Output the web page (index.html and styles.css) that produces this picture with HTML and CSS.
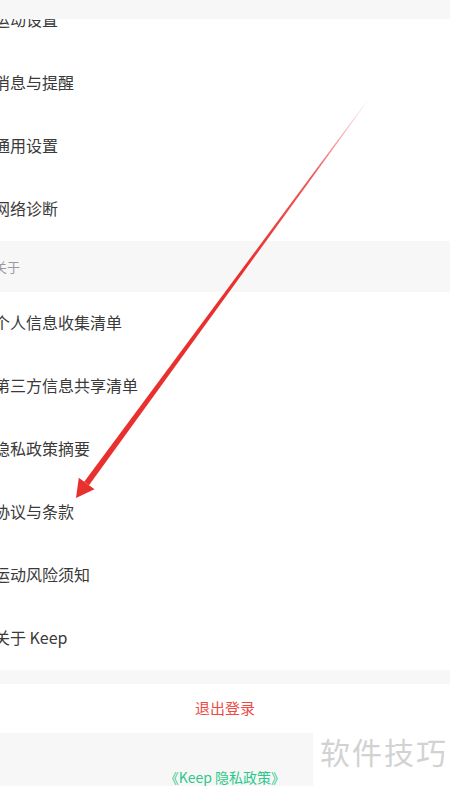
FILE: index.html
```html
<!DOCTYPE html>
<html lang="zh-CN">
<head>
    <meta charset="UTF-8">
    <meta name="viewport" content="width=device-width, initial-scale=1.0">
    <title>设置</title>
    <link rel="stylesheet" href="styles.css">
</head>
<body>

    <div class="page">
        <!-- top bar sits over the first row -->
        <div class="top-cover"></div>

        <div class="group first">
            <div class="row"><span>运动设置</span></div>
            <div class="row"><span>消息与提醒</span></div>
            <div class="row"><span>通用设置</span></div>
            <div class="row"><span>网络诊断</span></div>
        </div>

        <div class="section-title"><span>关于</span></div>

        <div class="group">
            <div class="row"><span>个人信息收集清单</span></div>
            <div class="row"><span>第三方信息共享清单</span></div>
            <div class="row"><span>隐私政策摘要</span></div>
            <div class="row"><span>协议与条款</span></div>
            <div class="row"><span>运动风险须知</span></div>
            <div class="row"><span>关于 Keep</span></div>
        </div>

        <div class="logout">退出登录</div>

        <div class="footer">
            <a class="policy">《Keep 隐私政策》</a>
        </div>

        <!-- red annotation arrow -->
        <svg class="arrow" width="450" height="786" viewBox="0 0 450 786">
            <defs>
                <linearGradient id="fade" gradientUnits="userSpaceOnUse" x1="370" y1="98" x2="84" y2="484">
                    <stop offset="0" stop-color="#e8302f" stop-opacity="0"/>
                    <stop offset="0.2" stop-color="#e8302f" stop-opacity="0.8"/>
                    <stop offset="0.45" stop-color="#e8302f" stop-opacity="1"/>
                    <stop offset="1" stop-color="#e8302f" stop-opacity="1"/>
                </linearGradient>
            </defs>
            <polygon points="368.3,100.2 367.7,99.8 84.2,481.7 89.0,485.3" fill="url(#fade)"/>
            <polygon points="94.5,489.2 78.8,477.8 76,498" fill="#e8302f"/>
        </svg>

        <div class="watermark">软件技巧</div>
    </div>

</body>
</html>
```

FILE: styles.css
```css
* {
    margin: 0;
    padding: 0;
    box-sizing: border-box;
}

body {
    font-family: "Noto Sans CJK SC", "Noto Sans", sans-serif;
    background: #f7f7f7;
    overflow: hidden;
}

.page {
    position: relative;
    width: 450px;
    height: 786px;
    overflow: hidden;
    background: #f7f7f7;
}

.top-cover {
    position: absolute;
    top: 0;
    left: 0;
    width: 100%;
    height: 19px;
    background: #f7f7f7;
    z-index: 2;
}

.group {
    background: #fff;
}

.group.first {
    margin-top: -11px;
}

.row {
    height: 63px;
    display: flex;
    align-items: center;
    padding-bottom: 4px;
    font-size: 16px;
    color: #3a3a3a;
}

.row span {
    margin-left: -6px;
}

.section-title {
    height: 51px;
    display: flex;
    align-items: center;
    font-size: 13px;
    color: #9a9a9a;
}

.section-title span {
    margin-left: -6px;
}

.logout {
    margin-top: 14px;
    height: 49px;
    background: #fff;
    display: flex;
    align-items: center;
    justify-content: center;
    padding-bottom: 2px;
    font-size: 15px;
    color: #ee4a44;
}

.footer {
    padding-top: 31px;
    text-align: center;
}

.policy {
    font-size: 14px;
    color: #2bc88a;
}

.arrow {
    position: absolute;
    top: 0;
    left: 0;
    z-index: 3;
}

.watermark {
    position: absolute;
    right: 0;
    bottom: 0;
    width: 137px;
    height: 53px;
    background: #fff;
    color: #d2d2d2;
    font-size: 30px;
    letter-spacing: 2px;
    padding-left: 7px;
    line-height: 36px;
    z-index: 4;
}
```
